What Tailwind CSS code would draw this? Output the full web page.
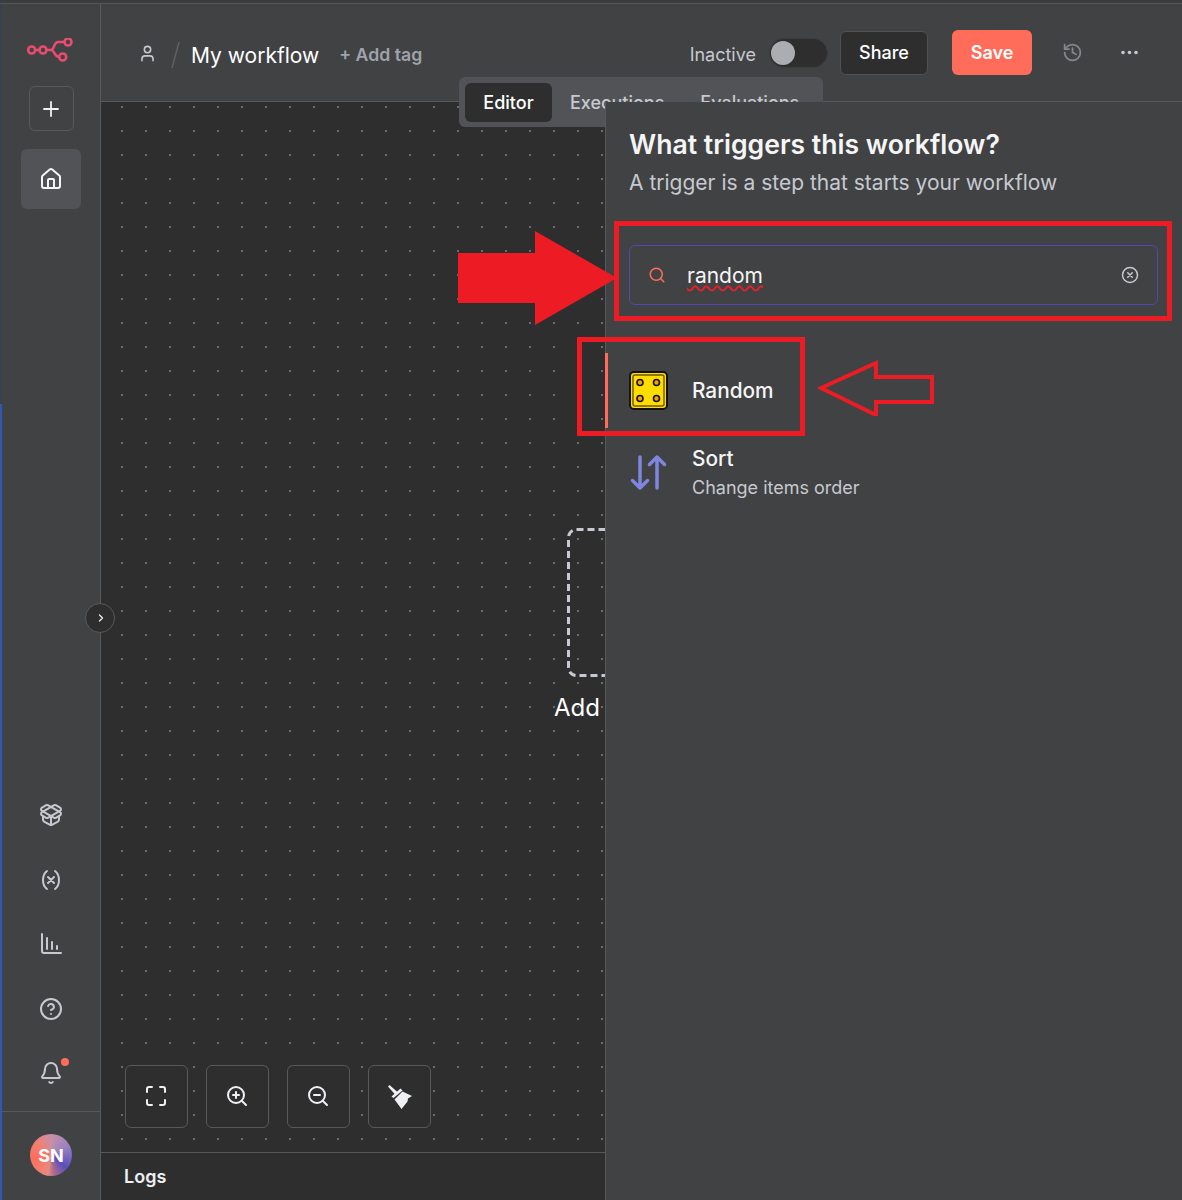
<!DOCTYPE html>
<html lang="en">
<head>
<meta charset="UTF-8">
<title>My workflow - n8n</title>
<script src="https://cdn.jsdelivr.net/npm/@tailwindcss/browser@4"></script>
</head>
<body class="bg-[#414244]">
<div class="relative w-[1182px] h-[1200px] overflow-hidden font-['Inter',sans-serif] text-[#f5f5f6]">
  <!-- window top edge -->
  <div class="h-1 bg-[#3b3c3e] border-b border-[#555659]"></div>
  <div class="flex h-[1196px]">
    <!-- left edge -->
    <div class="w-0.5 shrink-0 bg-[linear-gradient(180deg,#39414f_0,#39414f_400px,#3158b0_400px,#3158b0_100%)]"></div>
    <!-- sidebar -->
    <aside class="w-[99px] shrink-0 flex flex-col items-center bg-[#414244] border-r border-[#58595c]">
      <svg class="mt-[34px] -ml-[3px] w-[46px] h-6" viewBox="0 0 46 24" fill="none" stroke="#ea4b71" stroke-width="2.600">
        <circle cx="4.700" cy="12" r="3.500"/><circle cx="16" cy="12" r="3.500"/><circle cx="41" cy="4" r="3.500"/><circle cx="35.700" cy="19" r="3.500"/>
        <path d="M8.100 12h4.500M19.400 12H24c3.500 0 2.500-8 7-8h6.600M24 12c3.500 0 3.500 7 8.300 7"/>
      </svg>
      <button class="mt-6 w-[45px] h-[45px] flex items-center justify-center rounded-md border border-[#58595c]">
        <svg class="w-[18px] h-[18px]" viewBox="0 0 18 18" fill="none" stroke="#f0f1f3" stroke-width="1.800" stroke-linecap="round"><path d="M9 2v14M2 9h14"/></svg>
      </button>
      <div class="mt-[18px] w-[60px] h-[60px] flex items-center justify-center rounded-md bg-[#525356]">
        <svg class="w-[24px] h-[24px]" viewBox="0 0 24 24" fill="none" stroke="#f5f5f6" stroke-width="2" stroke-linecap="round" stroke-linejoin="round"><path d="M15 21v-8a1 1 0 0 0-1-1h-4a1 1 0 0 0-1 1v8"/><path d="M3 10a2 2 0 0 1 .709-1.528l7-5.999a2 2 0 0 1 2.582 0l7 5.999A2 2 0 0 1 21 10v9a2 2 0 0 1-2 2H5a2 2 0 0 1-2-2z"/></svg>
      </div>
      <nav class="mt-auto flex flex-col items-center gap-[40.500px] text-[#c6c9d0]">
        <svg class="w-6 h-6" viewBox="0 0 24 24" fill="none" stroke="currentColor" stroke-width="2" stroke-linecap="round" stroke-linejoin="round"><path d="M12 22v-9"/><path d="M15.170 2.210a1.670 1.670 0 0 1 1.630 0L21 4.570a1.930 1.930 0 0 1 0 3.360L8.820 14.790a1.655 1.655 0 0 1-1.640 0L3 12.430a1.930 1.930 0 0 1 0-3.360z"/><path d="M20 13v3.870a2.060 2.060 0 0 1-1.110 1.830l-6 3.080a1.930 1.930 0 0 1-1.780 0l-6-3.080A2.060 2.060 0 0 1 4 16.870V13"/><path d="M21 12.430a1.930 1.930 0 0 0 0-3.360L8.830 2.200a1.640 1.640 0 0 0-1.630 0L3 4.570a1.930 1.930 0 0 0 0 3.360l12.180 6.860a1.636 1.636 0 0 0 1.630 0z"/></svg>
        <svg class="w-6 h-6" viewBox="0 0 24 24" fill="none" stroke="currentColor" stroke-width="2" stroke-linecap="round" stroke-linejoin="round"><path d="M8 21s-4-3-4-9 4-9 4-9"/><path d="M16 3s4 3 4 9-4 9-4 9"/><path d="M15 9l-6 6M9 9l6 6"/></svg>
        <svg class="w-6 h-6" viewBox="0 0 24 24" fill="none" stroke="currentColor" stroke-width="2" stroke-linecap="round" stroke-linejoin="round"><path d="M3 2v17a2 2 0 0 0 2 2h17"/><path d="M8 17V6M13 17v-7M18 17v-3"/></svg>
        <svg class="w-6 h-6" viewBox="0 0 24 24" fill="none" stroke="currentColor" stroke-width="2" stroke-linecap="round" stroke-linejoin="round"><circle cx="12" cy="12" r="10"/><path d="M9.090 9a3 3 0 0 1 5.830 1c0 2-3 3-3 3"/><path d="M12 17h.01"/></svg>
        <div class="relative w-6 h-6">
          <svg class="w-6 h-6" viewBox="0 0 24 24" fill="none" stroke="currentColor" stroke-width="2" stroke-linecap="round" stroke-linejoin="round"><path d="M10.268 21a2 2 0 0 0 3.464 0"/><path d="M3.262 15.326A1 1 0 0 0 4 17h16a1 1 0 0 0 .74-1.673C19.41 13.956 18 12.499 18 8A6 6 0 0 0 6 8c0 4.499-1.411 5.956-2.738 7.326"/></svg>
          <span class="absolute top-[-3px] right-[-6px] w-2 h-2 rounded-full bg-[#ff6d5a]"></span>
        </div>
      </nav>
      <div class="mt-[26px] w-full h-[89px] pb-[2px] border-t border-[#58595c] flex items-center justify-center">
        <div class="w-[42px] h-[42px] rounded-full flex items-center justify-center text-[18px] font-bold text-white bg-[conic-gradient(#c98fa5,#9a84bf_60deg,#5c4dbf_130deg,#a86a8e_170deg,#e88a80_190deg,#ff6d5a_260deg,#f27f70_310deg,#c98fa5)]">SN</div>
      </div>
    </aside>
    <!-- main column -->
    <main class="flex-1 flex flex-col min-w-0">
      <header class="h-[98px] shrink-0 flex items-center bg-[#414244] border-b border-[#58595c] pl-[37px]">
        <svg class="mt-[2px] w-[19px] h-[19px] text-[#c6c9d0]" viewBox="0 0 24 24" fill="none" stroke="currentColor" stroke-width="2" stroke-linecap="round" stroke-linejoin="round"><path d="M19 21v-2a4 4 0 0 0-4-4H9a4 4 0 0 0-4 4v2"/><circle cx="12" cy="7" r="4"/></svg>
        <svg class="mt-[5px] ml-[14px] w-[9px] h-[26px]" viewBox="0 0 9 26" fill="none" stroke="#5f6064" stroke-width="1.500"><path d="M8 0 1 26"/></svg>
        <span class="mt-[5px] ml-[11px] text-[21px] leading-none text-white">My workflow</span>
        <span class="mt-[4px] ml-[20px] text-[17.700px] leading-none font-semibold text-[#9ea3ad]">+ Add tag</span>
        <span class="mt-[4px] ml-auto text-[18px] leading-none text-[#c6c9d0]">Inactive</span>
        <div class="ml-[13px] w-[59px] h-[30px] rounded-full bg-[#2e2e2e] border border-[#3b3c3e] flex items-center pl-[1px]">
          <span class="w-6 h-6 rounded-full bg-[#acadb2]"></span>
        </div>
        <button class="ml-3 w-[88px] h-[44px] rounded-md bg-[#2e2e2e] border border-[#505154] text-[18px] font-medium text-white">Share</button>
        <button class="ml-6 w-[80px] h-[45px] rounded-md bg-[#ff6d5a] text-[18px] font-semibold text-white">Save</button>
        <svg class="ml-[30px] w-[21px] h-[21px] text-[#85878c]" viewBox="0 0 24 24" fill="none" stroke="currentColor" stroke-width="2" stroke-linecap="round" stroke-linejoin="round"><path d="M3 12a9 9 0 1 0 9-9 9.750 9.750 0 0 0-6.740 2.740L3 8"/><path d="M3 3v5h5"/><path d="M12 7v5l4 2"/></svg>
        <svg class="ml-[37px] mr-[43px] w-[19px] h-[5px] text-[#c6c9d0]" viewBox="0 0 19 5" fill="currentColor"><circle cx="3" cy="2.500" r="1.800"/><circle cx="9.500" cy="2.500" r="1.800"/><circle cx="16" cy="2.500" r="1.800"/></svg>
      </header>
      <section class="relative flex-1 flex flex-col bg-[#2e2e2e]">
        <div class="flex-1 relative bg-[radial-gradient(circle,#6a6b6e_1px,transparent_1.400px)] bg-[size:24px_24px] bg-[position:9px_-7px]">
          <!-- add first step node -->
          <svg class="absolute left-[466px] top-[426px] w-[150px] h-[149px]" viewBox="0 0 150 149" fill="none" stroke="#c6c9d0" stroke-width="3" stroke-dasharray="7 4"><rect x="1.500" y="1.500" width="147" height="146" rx="8"/></svg>
          <div class="absolute left-[453px] top-[591px] text-[24px] leading-[30px] text-white">Add</div>
          <!-- canvas controls -->
          <div class="absolute left-6 bottom-6 flex gap-[18px]">
            <button class="w-[63px] h-[63px] flex items-center justify-center rounded-md border border-[#58595c] bg-[#2e2e2e]">
              <svg class="w-6 h-6 -translate-x-px -translate-y-px" viewBox="0 0 24 24" fill="none" stroke="#eef0f4" stroke-width="2" stroke-linecap="round" stroke-linejoin="round"><path d="M8 3H5a2 2 0 0 0-2 2v3M21 8V5a2 2 0 0 0-2-2h-3M3 16v3a2 2 0 0 0 2 2h3M16 21h3a2 2 0 0 0 2-2v-3"/></svg>
            </button>
            <button class="w-[63px] h-[63px] flex items-center justify-center rounded-md border border-[#58595c] bg-[#2e2e2e]">
              <svg class="w-6 h-6 -translate-x-px -translate-y-px" viewBox="0 0 24 24" fill="none" stroke="#eef0f4" stroke-width="2" stroke-linecap="round" stroke-linejoin="round"><circle cx="11" cy="11" r="8"/><path d="M21 21l-4.300-4.300M11 8v6M8 11h6"/></svg>
            </button>
            <button class="w-[63px] h-[63px] flex items-center justify-center rounded-md border border-[#58595c] bg-[#2e2e2e]">
              <svg class="w-6 h-6 -translate-x-px -translate-y-px" viewBox="0 0 24 24" fill="none" stroke="#eef0f4" stroke-width="2" stroke-linecap="round" stroke-linejoin="round"><circle cx="11" cy="11" r="8"/><path d="M21 21l-4.300-4.300M8 11h6"/></svg>
            </button>
            <button class="w-[63px] h-[63px] flex items-center justify-center rounded-md border border-[#58595c] bg-[#2e2e2e]">
              <svg class="w-6 h-6" viewBox="0 0 24 24" fill="#eef0f4"><path d="M0 1.500 1.500 0l8.500 7.500L7.500 10z"/><path d="M3.500 11.500 12.500 3.500l2 2L5.500 13z"/><path d="M6.500 14.500 14.500 6.500 24 11l-4 2.500-.5 3L13.500 24z"/></svg>
            </button>
          </div>
        </div>
        <div class="h-[48px] shrink-0 flex items-center pl-[23px] border-t border-[#58595c] text-[18px] font-semibold text-[#eef0f4]">Logs</div>
      </section>
    </main>
  </div>

  <!-- collapse toggle -->
  <button class="absolute left-[85px] top-[603px] w-[30px] h-[30px] pl-[2px] rounded-full bg-[#2e2e2e] border border-[#58595c] flex items-center justify-center">
    <svg class="w-3 h-3" viewBox="0 0 24 24" fill="none" stroke="#eef0f4" stroke-width="2.500" stroke-linecap="round" stroke-linejoin="round"><path d="m9 18 6-6-6-6"/></svg>
  </button>

  <!-- tabs, overlap header and canvas -->
  <div class="absolute left-[459px] top-[77px] w-[364px] h-[50px] p-[6px] flex items-center rounded-md bg-[#525356]">
    <div class="w-[87px] h-[39px] flex items-center justify-center rounded-md bg-[#2e2e2e] text-[18px] font-medium text-white">Editor</div>
    <div class="ml-[18px] text-[18px] font-medium text-[#c6c9d0]">Executions</div>
    <div class="ml-[36px] text-[18px] font-medium text-[#c6c9d0]">Evaluations</div>
  </div>

  <!-- node creator panel -->
  <aside class="absolute left-[605px] top-[102px] w-[577px] h-[1098px] bg-[#414244] border-l border-[#58595c] pl-[23px] pr-6">
    <h2 class="mt-[24px] text-[26.600px] leading-[36px] font-semibold text-[#f5f5f6]">What triggers this workflow?</h2>
    <p class="mt-[6px] text-[21px] leading-[30px] text-[#c6c9d0]">A trigger is a step that starts your workflow</p>
    <div class="mt-[47px] w-[529px] h-[60px] flex items-center rounded-md border border-[#5545b5] pl-[19px] pr-[18px]">
      <svg class="-ml-[1px] w-[18px] h-[18px]" viewBox="0 0 24 24" fill="none" stroke="#ff6d5a" stroke-width="2" stroke-linecap="round" stroke-linejoin="round"><circle cx="11" cy="11" r="8"/><path d="m21 21-4.340-4.340"/></svg>
      <span class="ml-[21px] text-[21px] leading-none text-[#f5f5f6] underline decoration-wavy decoration-[#e8202a] decoration-[1.500px] underline-offset-2">random</span>
      <svg class="ml-auto w-[18px] h-[18px]" viewBox="0 0 24 24" fill="none" stroke="#c6c9d0" stroke-width="2" stroke-linecap="round" stroke-linejoin="round"><circle cx="12" cy="12" r="10"/><path d="m15 9-6 6M9 9l6 6"/></svg>
    </div>
    <div class="mt-[48px] -ml-[24px] h-[75px] flex items-center border-l-[3px] border-[#ff6d5a] pl-[21px]">
      <svg class="w-[39px] h-[39px]" viewBox="0 0 39 39" fill="none">
        <rect x="1" y="1" width="37" height="37" rx="4" fill="#ffdd00" stroke="#111" stroke-width="2"/>
        <rect x="4" y="4" width="31" height="31" rx="2" stroke="#6b5600" stroke-width="1.400"/>
        <circle cx="11" cy="11.500" r="3" fill="#f5a300" stroke="#111" stroke-width="1.600"/><circle cx="27.500" cy="11.500" r="3" fill="#f5a300" stroke="#111" stroke-width="1.600"/>
        <circle cx="11" cy="27.500" r="3" fill="#f5a300" stroke="#111" stroke-width="1.600"/><circle cx="27.500" cy="27.500" r="3" fill="#f5a300" stroke="#111" stroke-width="1.600"/>
      </svg>
      <span class="ml-[24px] text-[20.800px] font-medium text-[#f5f5f6]">Random</span>
    </div>
    <div class="mt-[16px] flex items-center">
      <svg class="ml-[1px] w-[39px] h-[38px]" viewBox="0 0 39 38" fill="none" stroke="#7f86e0" stroke-width="3.500" stroke-linecap="round" stroke-linejoin="round"><path d="M10 3v31M2.500 26.500 10 34l7.500-7.500M27 34V3M19.500 10.500 27 3l7.500 7.500"/></svg>
      <div class="ml-[23px]">
        <div class="text-[20.800px] leading-[30px] font-medium text-[#f5f5f6]">Sort</div>
        <div class="text-[18px] leading-[28px] text-[#c6c9d0]">Change items order</div>
      </div>
    </div>
  </aside>

  <!-- red annotations -->
  <div class="absolute left-[614px] top-[221px] w-[558px] h-[100px] border-[5px] border-[#ed1c24]"></div>
  <div class="absolute left-[577px] top-[337px] w-[228px] h-[99px] border-[5px] border-[#ed1c24]"></div>
  <svg class="absolute left-[457px] top-[230px] w-[162px] h-[96px]" viewBox="0 0 162 96"><path d="M1 23h77V1l82 47-82 47V73H1z" fill="#ed1c24"/></svg>
  <svg class="absolute left-[818px] top-[360px] w-[118px] h-[56px]" viewBox="0 0 118 56" fill="none" stroke="#ed1c24" stroke-width="4"><path d="M3 28 58 3v14h56v25H58v13z"/></svg>
</div>
</body>
</html>
